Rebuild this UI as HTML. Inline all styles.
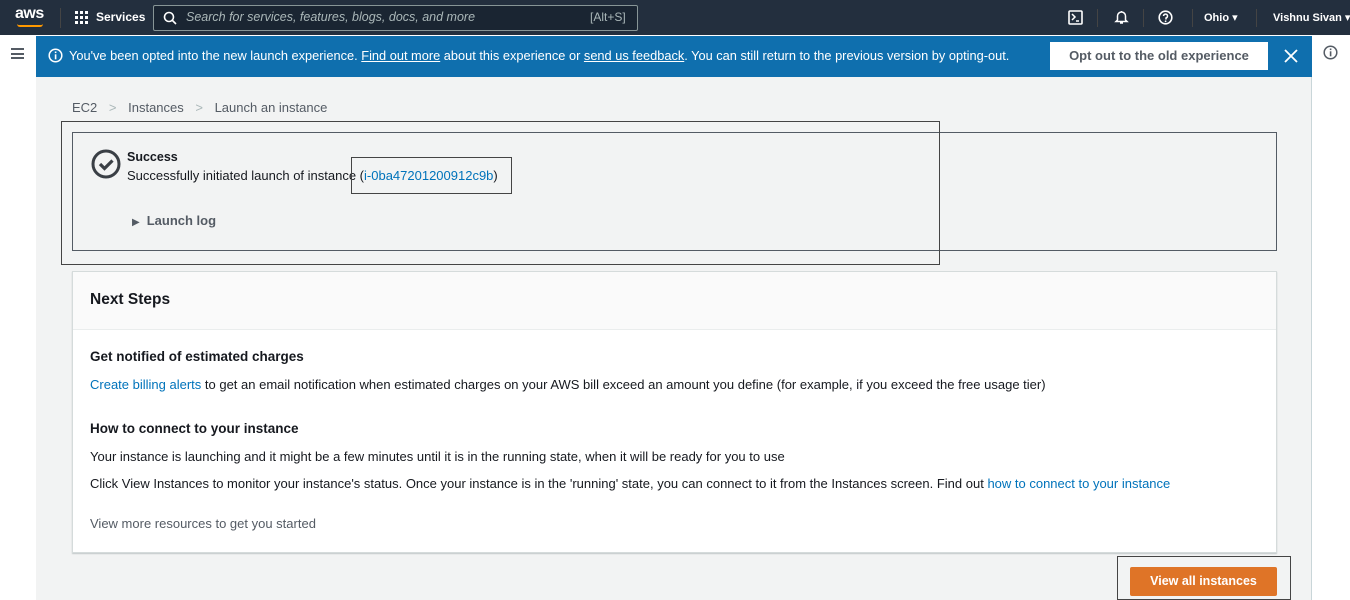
<!DOCTYPE html>
<html><head><meta charset="utf-8"><style>
*{margin:0;padding:0;box-sizing:border-box}
body{width:1350px;height:600px;overflow:hidden;font-family:"Liberation Sans","DejaVu Sans",sans-serif;background:#fff;position:relative;color:#16191f}
.abs{position:absolute;white-space:nowrap}
.nav{left:0;top:0;width:1350px;height:35px;background:#232f3e;color:#fff;font-size:12px}
.banner{left:36px;top:36px;width:1276px;height:41px;background:#0f6fae;color:#fff;font-size:12.8px}
.content{left:36px;top:77px;width:1276px;height:523px;background:#f2f3f3;border-right:1px solid #c9d6d9}
a{color:inherit}
.lnk{color:#0073bb}
</style></head><body>
<div class="abs nav">
  <div class="abs" style="left:15px;top:5px;font-size:16px;font-weight:bold;letter-spacing:-0.5px">aws</div>
  <div class="abs" style="left:17px;top:24px;width:26px;height:3px;border-bottom:2px solid #f90;border-radius:0 0 12px 12px"></div>
  <div class="abs" style="left:60px;top:8px;width:1px;height:20px;background:#444"></div>
  <svg class="abs" style="left:75px;top:11px" width="14" height="14"><g fill="#fff"><rect x="0" y="0" width="3" height="3"/><rect x="5" y="0" width="3" height="3"/><rect x="10" y="0" width="3" height="3"/><rect x="0" y="5" width="3" height="3"/><rect x="5" y="5" width="3" height="3"/><rect x="10" y="5" width="3" height="3"/><rect x="0" y="10" width="3" height="3"/><rect x="5" y="10" width="3" height="3"/><rect x="10" y="10" width="3" height="3"/></g></svg>
  <div class="abs" style="left:96px;top:10px;font-weight:bold">Services</div>
  <div class="abs" style="left:153px;top:5px;width:485px;height:26px;border:1px solid #879596;border-radius:2px;background:#1a2532"></div>
  <svg class="abs" style="left:163px;top:11px" width="14" height="14"><circle cx="6" cy="6" r="4.5" stroke="#fff" stroke-width="1.6" fill="none"/><line x1="9.5" y1="9.5" x2="13" y2="13" stroke="#fff" stroke-width="1.6"/></svg>
  <div class="abs" style="left:186px;top:10px;color:#aab7b8;font-style:italic;font-size:12.5px">Search for services, features, blogs, docs, and more</div>
  <div class="abs" style="left:590px;top:10px;color:#aab7b8">[Alt+S]</div>
  <svg class="abs" style="left:1068px;top:10px" width="15" height="15"><rect x="1" y="1" width="13" height="13" rx="1" stroke="#fff" stroke-width="1.6" fill="none"/><path d="M4 4l3 3-3 3M8 11h3" stroke="#fff" stroke-width="1.5" fill="none"/></svg>
  <div class="abs" style="left:1097px;top:9px;width:1px;height:18px;background:#444"></div>
  <svg class="abs" style="left:1114px;top:9px" width="15" height="16"><path d="M7.5 2v1M3.5 11V7a4 4 0 0 1 8 0v4l1.5 1.5h-11z M6 14h3" stroke="#fff" stroke-width="1.5" fill="none"/></svg>
  <div class="abs" style="left:1143px;top:9px;width:1px;height:18px;background:#444"></div>
  <svg class="abs" style="left:1158px;top:10px" width="15" height="15"><circle cx="7.5" cy="7.5" r="6.3" stroke="#fff" stroke-width="1.6" fill="none"/><path d="M5.5 6a2 2 0 1 1 2.5 2v1.5" stroke="#fff" stroke-width="1.5" fill="none"/><circle cx="7.6" cy="11.3" r="0.9" fill="#fff"/></svg>
  <div class="abs" style="left:1192px;top:9px;width:1px;height:18px;background:#444"></div>
  <div class="abs" style="left:1204px;top:11px;font-weight:bold;font-size:11px">Ohio ▾</div>
  <div class="abs" style="left:1256px;top:9px;width:1px;height:18px;background:#444"></div>
  <div class="abs" style="left:1273px;top:11px;font-weight:bold;font-size:11px">Vishnu Sivan ▾</div>
</div>
<div class="abs" style="left:11px;top:48px;width:13px;height:11px;border-top:2px solid #545b64;border-bottom:2px solid #545b64"><div style="margin-top:2.5px;height:2px;background:#545b64"></div></div>
<div class="abs banner">
  <svg class="abs" style="left:12px;top:12px" width="15" height="15"><circle cx="7.5" cy="7.5" r="6.3" stroke="#fff" stroke-width="1.5" fill="none"/><rect x="6.8" y="3.5" width="1.6" height="1.6" fill="#fff"/><rect x="6.8" y="6.3" width="1.6" height="5" fill="#fff"/></svg>
  <div class="abs" style="left:33px;top:12px">You've been opted into the new launch experience. <u>Find out more</u> about this experience or <u>send us feedback</u>. You can still return to the previous version by opting-out.</div>
  <div class="abs" style="left:1014px;top:6px;width:218px;height:28px;background:#fff;color:#545b64;font-weight:bold;font-size:13px;text-align:center;line-height:28px">Opt out to the old experience</div>
  <svg class="abs" style="left:1248px;top:13px" width="14" height="14"><path d="M1 1l12 12M13 1L1 13" stroke="#fff" stroke-width="1.8"/></svg>
</div>
<svg class="abs" style="left:1323px;top:45px" width="15" height="15"><circle cx="7.5" cy="7.5" r="6.3" stroke="#545b64" stroke-width="1.5" fill="none"/><rect x="6.8" y="3.5" width="1.6" height="1.6" fill="#545b64"/><rect x="6.8" y="6.3" width="1.6" height="5" fill="#545b64"/></svg>
<div class="abs content"></div>
<div class="abs" style="left:72px;top:100px;font-size:13px;color:#545b64">EC2 <span style="color:#aab7b8;margin:0 8px">&gt;</span> Instances <span style="color:#aab7b8;margin:0 8px">&gt;</span> Launch an instance</div>
<div class="abs" style="left:72px;top:132px;width:1205px;height:119px;border:1px solid #545b64"></div>
<div class="abs" style="left:61px;top:121px;width:879px;height:144px;border:1px solid #444"></div>
<svg class="abs" style="left:90px;top:148px" width="32" height="32"><circle cx="16" cy="16" r="13" stroke="#3a3f45" stroke-width="3" fill="none"/><path d="M10 16l4.5 4.5 8-8" stroke="#3a3f45" stroke-width="3.2" fill="none"/></svg>
<div class="abs" style="left:127px;top:150px;font-size:12.5px;font-weight:bold">Success</div>
<div class="abs" style="left:127px;top:168px;font-size:13px">Successfully initiated launch of instance (<span class="lnk">i-0ba47201200912c9b</span>)</div>
<div class="abs" style="left:351px;top:157px;width:161px;height:37px;border:1px solid #444"></div>
<div class="abs" style="left:132px;top:213px;font-size:13px;font-weight:bold;color:#545b64"><span style="font-size:10px;margin-right:7px">▶</span>Launch log</div>
<div class="abs" style="left:72px;top:271px;width:1205px;height:282px;background:#fff;border:1px solid #d5dbdb;box-shadow:0 1px 1px rgba(0,28,36,.2)"></div>
<div class="abs" style="left:73px;top:272px;width:1203px;height:58px;background:#fafafa;border-bottom:1px solid #eaeded"></div>
<div class="abs" style="left:90px;top:291px;font-size:15.5px;font-weight:bold">Next Steps</div>
<div class="abs" style="left:90px;top:349px;font-size:13.5px;font-weight:bold">Get notified of estimated charges</div>
<div class="abs" style="left:90px;top:377px;font-size:13px"><span class="lnk">Create billing alerts</span> to get an email notification when estimated charges on your AWS bill exceed an amount you define (for example, if you exceed the free usage tier)</div>
<div class="abs" style="left:90px;top:421px;font-size:13.5px;font-weight:bold">How to connect to your instance</div>
<div class="abs" style="left:90px;top:449px;font-size:13px">Your instance is launching and it might be a few minutes until it is in the running state, when it will be ready for you to use</div>
<div class="abs" style="left:90px;top:476px;font-size:13px">Click View Instances to monitor your instance's status. Once your instance is in the 'running' state, you can connect to it from the Instances screen. Find out <span class="lnk">how to connect to your instance</span></div>
<div class="abs" style="left:90px;top:516px;font-size:13px;color:#545b64">View more resources to get you started</div>
<div class="abs" style="left:1117px;top:556px;width:174px;height:44px;border:1px solid #444"></div>
<div class="abs" style="left:1130px;top:567px;width:147px;height:29px;background:#df7427;border-radius:2px;color:#fff;font-weight:bold;font-size:12.5px;text-align:center;line-height:29px">View all instances</div>
</body></html>
